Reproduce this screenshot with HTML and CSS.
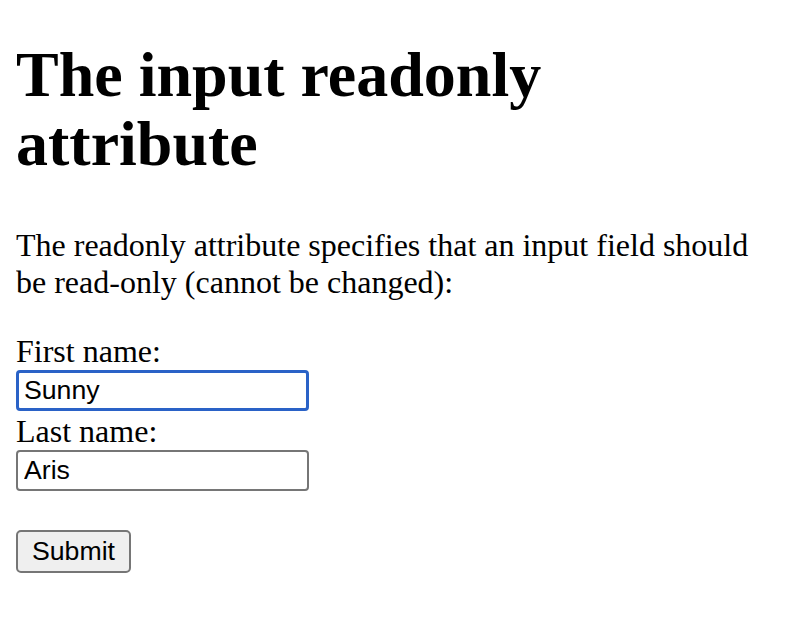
FILE: index.html
```html
<!DOCTYPE html>
<html>
<head>
<meta charset="utf-8">
<link rel="stylesheet" href="styles.css">
</head>
<body>
<h1 class="title">The input readonly attribute</h1>
<p class="intro">The readonly attribute specifies that an input field should be read-only (cannot be changed):</p>
<form class="form">
  <label class="label" for="fname">First name:</label><br>
  <input class="field field-focus" type="text" id="fname" name="fname" value="Sunny"><br>
  <label class="label" for="lname">Last name:</label><br>
  <input class="field" type="text" id="lname" name="lname" value="Aris" readonly><br><br>
  <input class="submit" type="submit" value="Submit">
</form>
</body>
</html>
```
FILE: styles.css
```css
html, body {
  background: #fff;
}
body {
  margin: 0 16px;
  font-family: "Liberation Serif", "Times New Roman", serif;
  font-size: 32px;
  color: #000;
}
.title {
  font-size: 64px;
  font-weight: bold;
  margin: 40px 0 49px;
  line-height: 69px;
}
.intro {
  margin: 0 0 32px;
  line-height: 37px;
}
.form {
  margin: 0;
  line-height: 37px;
}
.field {
  box-sizing: border-box;
  width: 293px;
  height: 41px;
  font-family: "Liberation Sans", Arial, sans-serif;
  font-size: 26.67px;
  color: #000;
  padding: 0 6px;
  border: 2px solid #767676;
  border-radius: 4px;
  background: #fff;
  margin: 0 0 2px;
  vertical-align: top;
}
.field-focus {
  border: 3px solid #2a62c7;
  padding: 0 5px;
  outline: none;
}
.submit {
  box-sizing: border-box;
  width: 115px;
  height: 43px;
  font-family: "Liberation Sans", Arial, sans-serif;
  font-size: 26.67px;
  color: #000;
  background: #efefef;
  border: 2px solid #767676;
  border-radius: 5px;
  padding: 0 12px;
  margin: 0;
  vertical-align: top;
}
```
